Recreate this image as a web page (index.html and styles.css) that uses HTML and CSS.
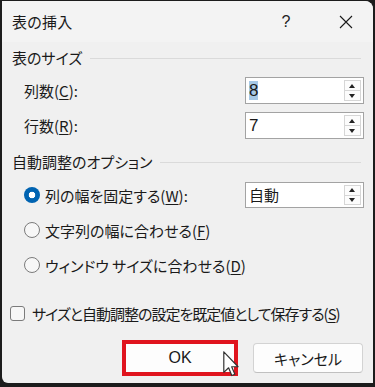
FILE: index.html
```html
<!DOCTYPE html>
<html lang="ja">
<head>
<meta charset="utf-8">
<link rel="stylesheet" href="styles.css">
</head>
<body>
<div class="dialog">
  <div class="titlebar">
    <span class="title">表の挿入</span>
    <span class="help">?</span>
    <span class="close"><svg width="14" height="14" viewBox="0 0 14 14"><path d="M1 1 L13 13 M13 1 L1 13" stroke="#1a1a1a" stroke-width="1.1" fill="none"/></svg></span>
  </div>
  <div class="content">
    <div class="group-head"><span>表のサイズ</span><i class="rule"></i></div>
    <div class="row">
      <span class="label">列数(<u>C</u>):</span>
      <div class="spin"><span class="val"><span class="sel">8</span></span><span class="arrows"><b class="up"></b><b class="down"></b></span></div>
    </div>
    <div class="row gap8">
      <span class="label">行数(<u>R</u>):</span>
      <div class="spin"><span class="val">7</span><span class="arrows"><b class="up"></b><b class="down"></b></span></div>
    </div>
    <div class="group-head g2"><span>自動調整のオプション</span><i class="rule"></i></div>
    <div class="row r1">
      <span class="radio-label"><i class="radio on"></i><span class="txt">列の幅を固定する(<u>W</u>):</span></span>
      <div class="spin"><span class="val">自動</span><span class="arrows"><b class="up"></b><b class="down"></b></span></div>
    </div>
    <div class="row rr">
      <span class="radio-label"><i class="radio"></i><span class="txt">文字列の幅に合わせる(<u>F</u>)</span></span>
    </div>
    <div class="row rr">
      <span class="radio-label"><i class="radio"></i><span class="txt">ウィンドウ サイズに合わせる(<u>D</u>)</span></span>
    </div>
    <div class="check-row"><i class="check"></i><span class="txt">サイズと自動調整の設定を既定値として保存する(<u>S</u>)</span></div>
    <div class="buttons">
      <button class="btn ok">OK</button>
      <button class="btn">キャンセル</button>
    </div>
  </div>
  <svg class="cursor" width="16" height="26" viewBox="0 0 12 19.5"><path d="M0.6 0.6 L0.6 16 L4.2 12.6 L6.6 18.4 L8.9 17.4 L6.5 11.8 L11.3 11.8 Z" fill="#fff" stroke="#333" stroke-width="0.9" stroke-linejoin="round"/></svg>
</div>
</body>
</html>
```

FILE: styles.css
```css
* { box-sizing: border-box; }
html, body { margin: 0; padding: 0; }
body {
  width: 375px;
  height: 387px;
  background: #1c1c1c;
  padding: 1px 2px 4px 2px;
  font-family: "Noto Sans CJK JP", "Noto Sans", sans-serif;
  font-feature-settings: "palt";
  color: #1a1a1a;
  font-size: 15px;
  overflow: hidden;
}
.dialog {
  position: relative;
  width: 371px;
  height: 382px;
  background: #f0f0f0;
  border-radius: 0 8px 0 6px;
}
.titlebar {
  height: 41px;
  display: flex;
  align-items: center;
  padding-left: 10px;
  background: #f3f3f3;
  border-radius: 0 8px 0 0;
}
.title { font-size: 15px; flex: 1; letter-spacing: 0.3px; }
.help { width: 20px; text-align: center; font-family: "Liberation Sans", sans-serif; font-size: 16px; margin-right: 43px; color: #222; }
.close { width: 14px; height: 14px; display: flex; margin-right: 20px; }
.content { padding: 0 10px 0 10px; }
.txt { white-space: nowrap; }
.group-head {
  height: 32px;
  display: flex;
  align-items: center;
  gap: 8px;
}
.group-head span { line-height: 1; position: relative; top: -1px; }
.group-head .rule { flex: 1; height: 1px; background: #dadada; margin-right: 2px; }
.group-head.g2 { height: 28px; margin-top: 9px; }
.row {
  height: 27px;
  display: flex;
  align-items: center;
  justify-content: space-between;
  margin-top: 3px;
}
.row.gap8 { margin-top: 8px; }
.row.r1 { margin-top: 6px; height: 26px; }
.row.rr { margin-top: 9px; height: 26px; }
.label { padding-left: 12px; }
.spin {
  width: 119px;
  height: 100%;
  border: 1px solid #a3a3a3;
  background: #fff;
  display: flex;
  align-items: center;
  margin-right: -1px;
  padding: 2px 2px 2px 3px;
}
.val { flex: 1; font-family: "Liberation Sans", "Noto Sans CJK JP", sans-serif; font-size: 17px; line-height: 20px; }
.r1 .val { font-family: "Noto Sans CJK JP", sans-serif; font-size: 15px; }
.sel { background: #a6c8e6; }
.arrows { width: 17px; height: 100%; display: flex; flex-direction: column; }
.arrows b {
  flex: 1;
  border: 1px solid #d6d6d6;
  background: #fcfcfc;
  position: relative;
}
.arrows b.up { border-bottom: none; }
.arrows b::after {
  content: "";
  position: absolute;
  left: 50%;
  top: 50%;
  margin-left: -3.5px;
  width: 0; height: 0;
  border-left: 3.5px solid transparent;
  border-right: 3.5px solid transparent;
}
.arrows b.up::after { border-bottom: 4px solid #222; margin-top: -2px; }
.arrows b.down::after { border-top: 4px solid #222; margin-top: -2px; }
.radio-label { display: flex; align-items: center; padding-left: 12px; gap: 5px; }
.radio {
  width: 16px; height: 16px;
  border-radius: 50%;
  border: 1px solid #7b7b7b;
  background: #f7f7f7;
  display: block;
  flex: none;
}
.radio.on {
  border: none;
  background: radial-gradient(circle, #fff 0 3px, #0063b1 3.6px);
}
.check-row {
  margin-top: 22px;
  margin-left: -2px;
  height: 26px;
  display: flex;
  align-items: center;
  gap: 7px;
  letter-spacing: -1px;
}
.check {
  width: 15px; height: 15px;
  border: 1px solid #7b7b7b;
  border-radius: 3px;
  background: #f7f7f7;
  display: block;
  flex: none;
}
.buttons {
  margin-top: 17px;
  display: flex;
  justify-content: flex-end;
  gap: 18px;
}
.btn {
  width: 110px;
  height: 30px;
  background: #fdfdfd;
  border: 1px solid #d3d3d3;
  border-bottom-color: #c0c0c0;
  border-radius: 4px;
  font-family: "Noto Sans CJK JP", "Noto Sans", sans-serif;
  font-feature-settings: "palt";
  font-size: 15px;
  color: #1a1a1a;
  padding: 0;
}
.btn.ok {
  font-family: "Liberation Sans", sans-serif;
  font-size: 16px;
  outline: 4px solid #e0141e;
  outline-offset: -1px;
  border-radius: 0;
}
.cursor { position: absolute; left: 221px; top: 350px; }
u { text-decoration-thickness: 1px; text-underline-offset: 2px; }
```
